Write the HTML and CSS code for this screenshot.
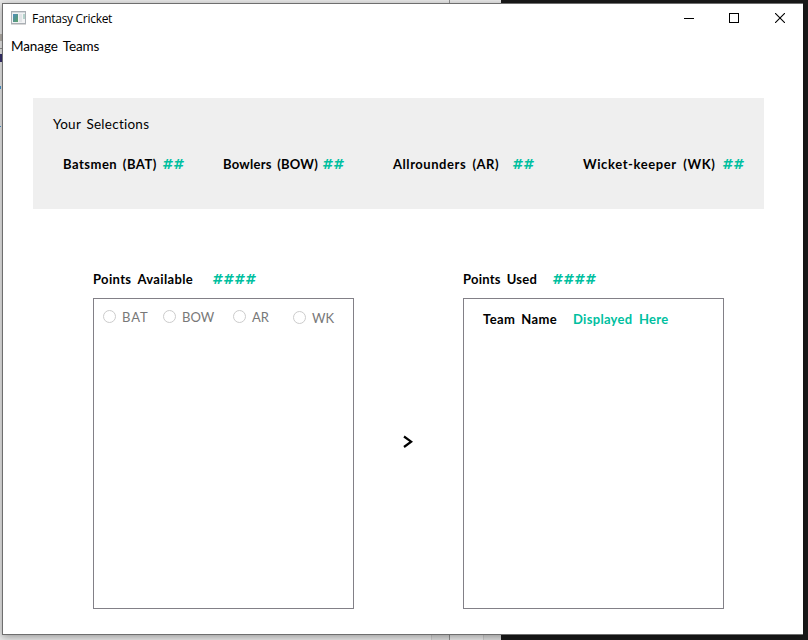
FILE: index.html
```
<!DOCTYPE html>
<html lang="en">
<head>
<meta charset="utf-8">
<title>Fantasy Cricket</title>
<link rel="stylesheet" href="styles.css">
</head>
<body>
<div class="desktop">
  <div class="backdrop">
    <div class="back-light">
      <i class="edge-mark mark-gray"></i><i class="edge-mark mark-line"></i><i class="edge-mark mark-navy"></i><i class="edge-mark mark-blue"></i><i class="edge-mark mark-blue-low"></i>
      <i class="scroll-strip"></i>
    </div>
    <div class="back-mid"><i class="scroll-strip"></i></div>
    <div class="back-dark"></div>
  </div>
  <main class="window">
    <header class="titlebar">
      <svg class="app-icon" width="15" height="14" viewBox="0 0 15 14">
        <defs><linearGradient id="pane" x2="1" y2="1"><stop stop-color="#4d8dc0"/><stop offset=".6" stop-color="#559786"/><stop offset="1" stop-color="#5fa36b"/></linearGradient></defs>
        <rect x=".5" y=".5" width="14" height="12" fill="#f2f3f4" stroke="#a9afb4"/>
        <path d="M1 1.5h13" stroke="#d5dade"/>
        <rect x="2" y="3" width="5" height="8" fill="url(#pane)"/>
        <rect x="8" y="3" width="3" height="8" fill="#e1e4e7"/>
        <rect x="12" y="3" width="2" height="5" fill="#b5d3cc"/>
        <path d="M0 13.5h15" stroke="#d6d6d6"/>
      </svg>
      <span class="title">Fantasy Cricket</span>
      <div class="controls">
        <svg width="10" height="10" viewBox="0 0 10 10" shape-rendering="crispEdges"><path d="M0 5.5h10" stroke="#000"/></svg>
        <svg width="10" height="10" viewBox="0 0 10 10"><rect x=".5" y=".5" width="9" height="9" fill="none" stroke="#000"/></svg>
        <svg width="10" height="10" viewBox="0 0 10 10"><path d="M0 0l10 10M10 0L0 10" stroke="#000" stroke-width="1.1"/></svg>
      </div>
    </header>
    <nav class="menubar"><span class="manage">Manage Teams</span></nav>
    <section class="selections">
      <div class="heading"><span class="your">Your Selections</span></div>
      <div class="counts">
        <div class="count c-bat"><span class="bat">Batsmen (BAT)</span><b class="hash">##</b></div>
        <div class="count c-bow"><span class="bow">Bowlers (BOW)</span><b class="hash">##</b></div>
        <div class="count c-ar"><span class="ar">Allrounders (AR)</span><b class="hash">##</b></div>
        <div class="count c-wk"><span class="wk">Wicket-keeper (WK)</span><b class="hash">##</b></div>
      </div>
    </section>
    <section class="teams">
      <div class="column">
        <div class="points p-avail"><span class="avail">Points Available</span><b class="hash">####</b></div>
        <div class="list roles">
          <label><i class="radio"></i><span class="r-bat">BAT</span></label>
          <label><i class="radio"></i><span class="r-bow">BOW</span></label>
          <label><i class="radio"></i><span class="r-ar">AR</span></label>
          <label class="low"><i class="radio"></i><span class="r-wk">WK</span></label>
        </div>
      </div>
      <div class="transfer"><svg width="10" height="14" viewBox="0 0 10 14"><path d="M1 1.5L8.2 6.7L1 12" fill="none" stroke="#000" stroke-width="2.2"/></svg></div>
      <div class="column">
        <div class="points p-used"><span class="used">Points Used</span><b class="hash">####</b></div>
        <div class="list team"><span class="tn">Team Name</span><span class="shown">Displayed Here</span></div>
      </div>
    </section>
  </main>
</div>
</body>
</html>
```
FILE: styles.css
```
* { box-sizing: border-box; }
body { margin: 0; font: 13px/20px "Comic Sans MS", Lato, sans-serif; color: #000; }
span, b { white-space: nowrap; }
.desktop { width: 808px; height: 640px; display: grid; overflow: hidden; }
.backdrop, .window { grid-area: 1 / 1; }
.backdrop { display: grid; grid-template-columns: 450px 51px 1fr; }
.back-light, .back-mid { position: relative; }
.back-light { background: #e9e9e9; border-right: 1px solid #929292; }
.back-mid { background: #e9e9e9; }
.back-dark { background: #1a1a1a; }
.scroll-strip { position: absolute; right: 0; bottom: 0; width: 18px; height: 6px; border-left: 1px solid #ccc; background: #dedede; }
.edge-mark { position: absolute; left: 0; width: 2px; height: 3px; }
.mark-gray { top: 34px; height: 7px; background: #b5b0aa; }
.mark-line { top: 48px; height: 1px; background: #929292; }
.mark-navy { top: 54px; height: 8px; background: #36306c; }
.mark-blue { top: 86px; width: 1px; background: #4796cf; }
.mark-blue-low { top: 126px; width: 1px; height: 1px; background: #4796cf; }
.window { z-index: 1; margin: 3px 5px 5px 2px; border: 1px solid #6e6e6e; border-right: 0; background: #fff; box-shadow: 0 2px 8px rgba(0,0,0,.35); }
.titlebar { height: 30px; display: flex; align-items: center; padding: 0 18px 2px 8px; }
.app-icon { margin-right: 6px; }
.title { font: 12px/16px "Open Sans", sans-serif; letter-spacing: -.3px; padding-top: 1px; }
.controls { margin-left: auto; display: flex; gap: 36px; }
.controls svg { display: block; }
.controls svg:first-child { margin-right: -1px; }
.menubar { height: 64px; padding: 2px 8px; }
.selections { width: 731px; height: 111px; margin-left: 30px; background: #efefef; padding: 16px 0 0 20px; }
.counts { display: grid; grid-template-columns: 160px 170px 190px 1fr; margin: 20px 0 0 10px; font-weight: 700; }
.count, .points { display: grid; }
.c-bat, .c-bow { grid-template-columns: 100px 1fr; }
.c-ar { grid-template-columns: 120px 1fr; }
.c-wk { grid-template-columns: 140px 1fr; }
.hash { color: #00bf9f; font: italic 700 14px/20px "DejaVu Sans", sans-serif; letter-spacing: 1.25px; margin-left: -1px; }
.teams { display: grid; grid-template-columns: 261px 109px 261px; margin: 60px 0 0 90px; }
.points { height: 29px; font-weight: 700; }
.p-avail { grid-template-columns: 120px 1fr; }
.p-used { grid-template-columns: 90px 1fr; }
.list { height: 311px; border: 1px solid #828087; }
.roles { display: grid; grid-template-columns: 60px 70px 60px 1fr; padding: 8px 9px; color: #787878; align-items: start; }
.roles label { display: flex; align-items: center; gap: 6px; }
.roles .low { padding-top: 1px; }
.radio { width: 13px; height: 13px; border: 1px solid #ccc; border-radius: 50%; margin-top: -1px; }
.transfer { padding: 166px 0 0 49px; }
.transfer svg { display: block; }
.team { display: grid; grid-template-columns: 90px 1fr; padding: 10px 19px; font-weight: 700; }
.shown { color: #00bf9f; word-spacing: 3px; letter-spacing: .3px; }
.manage { font-size: 13.5px; word-spacing: 2px; letter-spacing: -.1px; }
.your { font-size: 13.5px; word-spacing: 2px; letter-spacing: .25px; }
.bat { word-spacing: 2px; letter-spacing: .5px; }
.bow { word-spacing: 2px; letter-spacing: .25px; }
.ar { word-spacing: 2.5px; letter-spacing: .55px; }
.wk { word-spacing: 3px; letter-spacing: .6px; }
.avail { word-spacing: 3px; letter-spacing: .35px; }
.used { word-spacing: 2.5px; letter-spacing: .25px; }
.tn { word-spacing: 2.5px; letter-spacing: .4px; }
.r-bat { letter-spacing: .9px; }
```
